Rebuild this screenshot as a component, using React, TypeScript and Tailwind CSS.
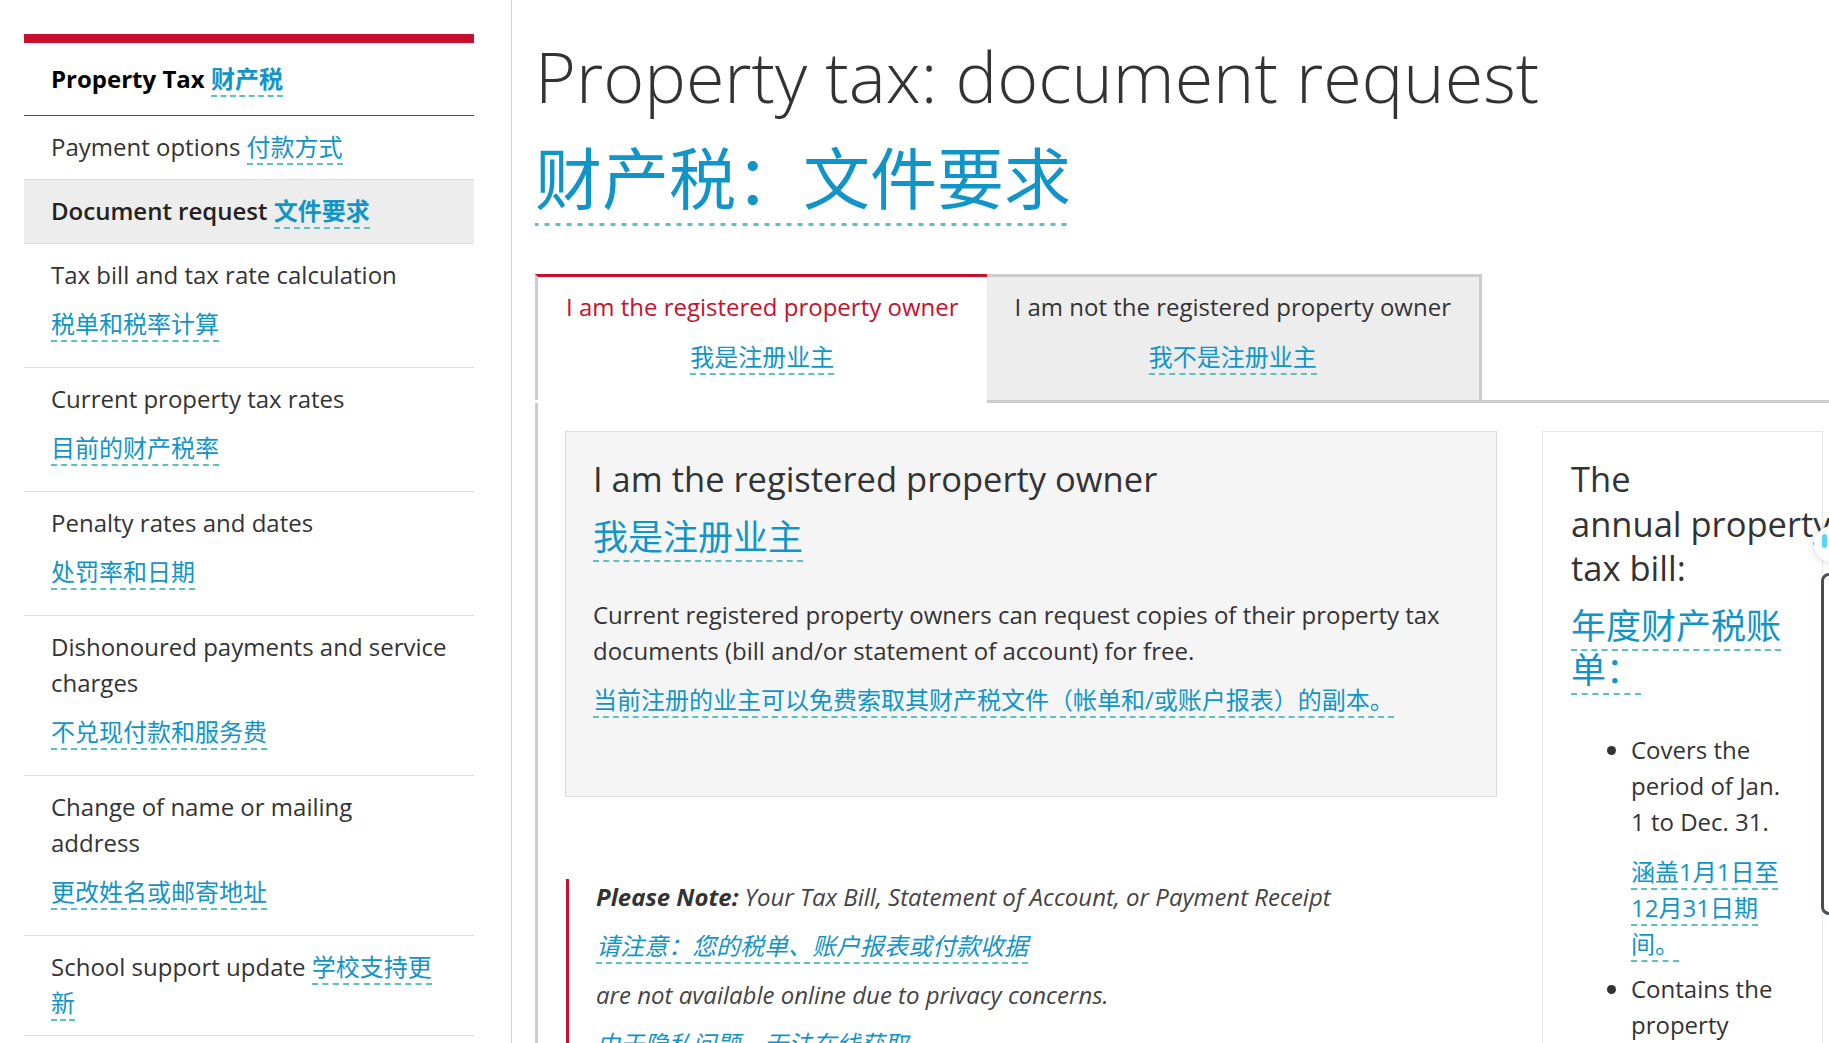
import React from 'react';

type ZhProps = { children: React.ReactNode; className?: string };

// Chinese translation with the dashed teal underline
function Zh({ children, className = '' }: ZhProps) {
  return (
    <span className={`border-b-2 border-dashed border-[#5bc2c0] text-[#1195c8] ${className}`}>
      {children}
    </span>
  );
}

type NavItem = { en: string; zh: string; inline?: boolean; active?: boolean };

const navItems: NavItem[] = [
  { en: 'Payment options', zh: '付款方式', inline: true },
  { en: 'Document request', zh: '文件要求', inline: true, active: true },
  { en: 'Tax bill and tax rate calculation', zh: '税单和税率计算' },
  { en: 'Current property tax rates', zh: '目前的财产税率' },
  { en: 'Penalty rates and dates', zh: '处罚率和日期' },
  { en: 'Dishonoured payments and service charges', zh: '不兑现付款和服务费' },
  { en: 'Change of name or mailing address', zh: '更改姓名或邮寄地址' },
  { en: 'School support update', zh: '学校支持更新', inline: true },
];

function Sidebar() {
  return (
    <aside className="w-[512px] shrink-0 border-r border-[#d2d2d2] pl-[24px] pt-[34px]">
      <nav className="w-[450px] border-t-[9px] border-[#c8102e]">
        <ul className="text-[24px] leading-[36px]">
          <li className="border-b border-[#c8102e] px-[27px] py-[18px] font-bold text-black">
            Property Tax <Zh>财产税</Zh>
          </li>
          {navItems.map((item) => (
            <li
              key={item.en}
              className={`border-b border-[#dcdcdc] px-[27px] pt-[13px] pb-[14px] ${
                item.active ? 'bg-[#ededed] font-semibold text-[#222]' : 'text-[#333]'
              }`}
            >
              {item.inline ? (
                <>
                  {item.en} <Zh>{item.zh}</Zh>
                </>
              ) : (
                <>
                  <p>{item.en}</p>
                  <p className="mt-[13px] mb-[11px]">
                    <Zh>{item.zh}</Zh>
                  </p>
                </>
              )}
            </li>
          ))}
        </ul>
      </nav>
    </aside>
  );
}

function Tabs() {
  return (
    <div className="mt-[56px] flex items-start text-[24px] leading-[36px]">
      <div className="border-t-[3px] border-l-[3px] border-t-[#c8102e] border-l-[#ccc] bg-white px-[28px] pt-[12px] pb-[25px] text-center text-[#c8102e]">
        <p>I am the registered property owner</p>
        <p className="mt-[14px]">
          <Zh>我是注册业主</Zh>
        </p>
      </div>
      <div className="border-[3px] border-l-0 border-[#ccc] bg-[#ededed] px-[28px] pt-[12px] pb-[25px] text-center text-[#333]">
        <p>I am not the registered property owner</p>
        <p className="mt-[14px]">
          <Zh>我不是注册业主</Zh>
        </p>
      </div>
      <div className="h-[129px] flex-1 border-b-[3px] border-[#ccc]" />
    </div>
  );
}

function OwnerPanel() {
  return (
    <div className="flex flex-1 items-start gap-[45px] border-l-[3px] border-[#ccc] pl-[27px] pt-[28px]">
      <div className="w-[932px] shrink-0">
        {/* Carte grise */}
        <section className="border border-[#dcdcdc] bg-[#f5f5f5] px-[27px] pt-[25px] pb-[78px]">
          <h2 className="text-[34.5px] leading-[44.5px] text-[#333]">I am the registered property owner</h2>
          <p className="mt-[13px] text-[35px] leading-[44.5px]">
            <Zh>我是注册业主</Zh>
          </p>
          <p className="mt-[38px] text-[24px] leading-[36px] text-[#333]">
            Current registered property owners can request copies of their property tax documents (bill
            and/or statement of account) for free.
          </p>
          <p className="mt-[13px] text-[24px] leading-[36px]">
            <Zh>当前注册的业主可以免费索取其财产税文件（帐单和/或账户报表）的副本。</Zh>
          </p>
        </section>

        {/* Note */}
        <div className="mt-[82px] ml-[1px] border-l-[3px] border-[#c8102e] pl-[27px] text-[24px] italic leading-[36px] text-[#444]">
          <p>
            <strong className="font-bold text-[#333]">Please Note:</strong> Your Tax Bill, Statement of
            Account, or Payment Receipt
          </p>
          <p className="mt-[13px]">
            <Zh>请注意：您的税单、账户报表或付款收据</Zh>
          </p>
          <p className="mt-[13px]">are not available online due to privacy concerns.</p>
          <p className="mt-[13px]">
            <Zh>由于隐私问题，无法在线获取</Zh>
          </p>
        </div>
      </div>

      <aside className="w-[281px] shrink-0 border border-[#e6e6e6] bg-white px-[28px] pt-[25px] pb-[28px] text-[#333]">
        <h3 className="text-[34.5px] leading-[44.5px]">The annual{'\u00a0'}property tax bill:</h3>
        <p className="mt-[13px] text-[35px] leading-[44.5px]">
          <Zh>年度财产税账单：</Zh>
        </p>
        <ul className="mt-[39px] list-disc pl-[60px] text-[24px] leading-[36px]">
          <li>
            Covers the period of Jan. 1 to Dec. 31.
            <p className="mt-[14px]">
              <Zh>涵盖1月1日至12月31日期间。</Zh>
            </p>
          </li>
          <li className="mt-[9px]">Contains the property assessment information.</li>
        </ul>
      </aside>
    </div>
  );
}

export default function App() {
  return (
    <div className="relative flex h-[1043px] w-full overflow-hidden bg-white font-['Open_Sans','Noto_Sans_CJK_SC',sans-serif] text-[#333]">
      <Sidebar />

      <main className="flex min-w-0 flex-1 flex-col pl-[23px] pt-[36px]">
        <h1 className="text-[70px] font-light leading-[80px] text-[#333]">Property tax: document request</h1>
        <p className="mt-[22px] text-[67px] leading-[80px]">
          <span className="bg-[linear-gradient(to_right,#5bc2c0_50%,transparent_50%)] bg-[length:11px_3px] bg-bottom bg-repeat-x pb-[2px] text-[#1195c8]">
            财产税：文件要求
          </span>
        </p>
        <Tabs />
        <OwnerPanel />
      </main>

      {/* widgets flottants du navigateur */}
      <div className="absolute top-[526px] left-[1814px] h-[36px] w-[40px] rounded-full bg-white shadow-[0_0_8px_rgba(0,0,0,0.18)]">
        <div className="absolute top-[8px] left-[8px] h-[14px] w-[5px] rounded-sm bg-[#5ad7f0]" />
      </div>
      <div className="absolute top-[573px] left-[1821px] h-[342px] w-[40px] rounded-[8px] border-[3px] border-[#4a4d55]" />
    </div>
  );
}
